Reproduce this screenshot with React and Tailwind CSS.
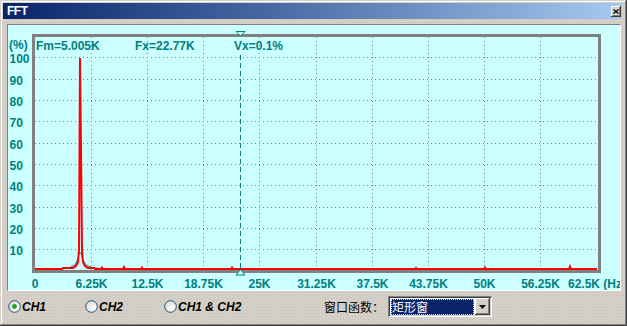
import React from 'react';

const TEAL = '#008080';

const yTicks = [
  { v: '10', y: 249.5 },
  { v: '20', y: 228.5 },
  { v: '30', y: 207.5 },
  { v: '40', y: 185.5 },
  { v: '50', y: 164.5 },
  { v: '60', y: 143.5 },
  { v: '70', y: 121.5 },
  { v: '80', y: 100.5 },
  { v: '90', y: 79.5 },
  { v: '100', y: 57.5 },
];

const xTicks = [
  { t: '0', x: 35 },
  { t: '6.25K', x: 91.5 },
  { t: '12.5K', x: 147.5 },
  { t: '18.75K', x: 203.5 },
  { t: '25K', x: 259.5 },
  { t: '31.25K', x: 316.5 },
  { t: '37.5K', x: 372.5 },
  { t: '43.75K', x: 428.5 },
  { t: '50K', x: 484.5 },
  { t: '56.25K', x: 540.5 },
  { t: '62.5K (Hz)', x: 597 },
];

// red trace: flat noise floor with a single tone around 5K
const trace = [
  [35, 269], [62, 269], [63, 268], [73, 268], [76, 266], [78, 262], [79, 250],
  [80, 58], [81, 147], [82, 250], [83, 262], [85, 266], [88, 268], [94, 268],
  [95, 269], [101, 269], [102, 267.5], [103, 269], [123, 269], [124, 267], [125, 269],
  [141, 269], [142, 267.5], [143, 269], [231, 269], [232, 267.5], [233, 269],
  [415, 269], [416, 268], [417, 269], [484, 269], [485, 267.5], [486, 269],
  [569, 269], [570, 266.5], [571, 269], [597, 269],
];

function Chart() {
  return (
    <svg width="612" height="265" viewBox="8 25 612 265" className="block font-['Liberation_Sans',Arial,sans-serif]">
      {/* grid */}
      {xTicks.slice(1, 10).map(({ x }) => (
        <line key={x} x1={x} y1="37" x2={x} y2="270" stroke="#808080" strokeWidth="1" strokeDasharray="1 3" />
      ))}
      {yTicks.map(({ y }) => (
        <line key={y} x1="35" y1={y} x2="598" y2={y} stroke="#808080" strokeWidth="1" strokeDasharray="1 3" />
      ))}

      {/* plot frame */}
      <rect x="33.5" y="35.5" width="566" height="236" fill="none" stroke="#808080" strokeWidth="3" />

      {/* faint second trace under the peak */}
      <polyline
        points="62,268.5 70,267.5 75,265 78,259 79,253 81,253 83,260 86,265 92,267.5 100,268.5"
        fill="none"
        stroke="#2a7070"
        strokeWidth="1"
      />
      <polyline points={trace.map((p) => p.join(',')).join(' ')} fill="none" stroke="#ff0000" strokeWidth="2" />

      {/* cursor */}
      <line x1="240.5" y1="55" x2="240.5" y2="269" stroke={TEAL} strokeWidth="1" strokeDasharray="5 3" />
      <polygon points="236,31.5 245,31.5 240.5,36" fill="#ccffff" stroke={TEAL} strokeWidth="1" />
      <polygon points="240.5,269.5 236,275 245,275" fill="#ccffff" stroke={TEAL} strokeWidth="1" />

      {/* labels */}
      <g fill={TEAL} fontWeight="bold" fontSize="12">
        <text x="9" y="49">(%)</text>
        <text x="36" y="50">Fm=5.005K</text>
        <text x="135" y="50">Fx=22.77K</text>
        <text x="234" y="50">Vx=0.1%</text>
        {yTicks.map(({ v, y }) => (
          <text key={v} x="9.5" y={y + 5}>{v}</text>
        ))}
        {xTicks.map(({ t, x }) => (
          <text key={t} x={x} y="288" textAnchor="middle">{t}</text>
        ))}
      </g>
    </svg>
  );
}

function Radio({ checked, label, width }) {
  return (
    <div className="flex items-center shrink-0" style={{ width }}>
      <svg width="13" height="13" viewBox="0 0 13 13" className="shrink-0">
        <defs>
          <radialGradient id="rf" cx="0.7" cy="0.7" r="0.8">
            <stop offset="0" stopColor="#ffffff" />
            <stop offset="1" stopColor="#dcdad5" />
          </radialGradient>
        </defs>
        <circle cx="6.5" cy="6.5" r="5.8" fill="url(#rf)" stroke="#1c5180" strokeWidth="1" />
        {checked && <circle cx="6.5" cy="6.5" r="2.4" fill="#21a121" />}
      </svg>
      <span className="ml-[1px] text-[12px] leading-none font-bold italic text-black font-['Liberation_Sans',Arial,sans-serif]">
        {label}
      </span>
    </div>
  );
}

export default function App() {
  return (
    <div className="w-[627px] h-[326px] overflow-hidden flex flex-col bg-[#d4d0c8] bg-[radial-gradient(circle,#c6c2ba_0.7px,transparent_0.9px)] bg-[length:3px_3px] shadow-[inset_-1px_-1px_#404040,inset_1px_1px_#d4d0c8,inset_-2px_-2px_#808080,inset_2px_2px_#ffffff]">
      {/* title bar */}
      <div className="mt-[3px] ml-[3px] w-[619px] h-[16px] shrink-0 flex items-center justify-between pl-[4px] pr-[1px] bg-gradient-to-r from-[#0a246a] to-[#a6caf0]">
        <span className="text-white text-[12px] leading-none font-bold tracking-[-0.5px] font-['Liberation_Sans',Arial,sans-serif]">
          FFT
        </span>
        <div className="w-[10px] h-[11px] flex items-center justify-center bg-[#d4d0c8] shadow-[inset_-1px_-1px_#404040,inset_1px_1px_#ffffff,inset_-2px_-2px_#808080]">
          <svg width="6" height="5" viewBox="0 0 6 5">
            <path d="M0.5 0.5 L5.5 4.5 M5.5 0.5 L0.5 4.5" stroke="#000" strokeWidth="1.2" />
          </svg>
        </div>
      </div>

      {/* spectrum panel */}
      <div className="mt-[5px] ml-[7px] w-[614px] h-[267px] shrink-0 bg-[#ccffff] border border-t-[#808080] border-l-[#808080] border-r-white border-b-white">
        <Chart />
      </div>

      {/* controls */}
      <div className="h-[31px] shrink-0 flex items-center pl-[8px]">
        <Radio checked label="CH1" width={77} />
        <Radio label="CH2" width={79} />
        <Radio label="CH1 & CH2" width={160} />
        <span className="w-[64px] shrink-0 text-[12px] leading-none text-black font-['Noto_Sans_CJK_SC',sans-serif]">
          窗口函数：
        </span>
        <div className="w-[104px] h-[21px] shrink-0 flex items-center p-[2px] bg-white shadow-[inset_1px_1px_#808080,inset_-1px_-1px_#ffffff,inset_2px_2px_#404040,inset_-2px_-2px_#d4d0c8]">
          <div className="ml-[1px] w-[83px] h-[16px] flex items-center pl-[1px] bg-[#0a246a] outline outline-1 outline-dotted outline-[#e8e0a0] -outline-offset-1">
            <span className="text-white text-[12px] leading-none font-['Noto_Sans_CJK_SC',sans-serif]">矩形窗</span>
          </div>
          <div className="ml-[1px] w-[15px] h-[17px] flex items-center justify-center bg-[#d4d0c8] shadow-[inset_-1px_-1px_#404040,inset_1px_1px_#ffffff,inset_-2px_-2px_#808080]">
            <svg width="7" height="4" viewBox="0 0 7 4">
              <path d="M0 0 H7 L3.5 4 Z" fill="#000" />
            </svg>
          </div>
        </div>
      </div>
    </div>
  );
}
